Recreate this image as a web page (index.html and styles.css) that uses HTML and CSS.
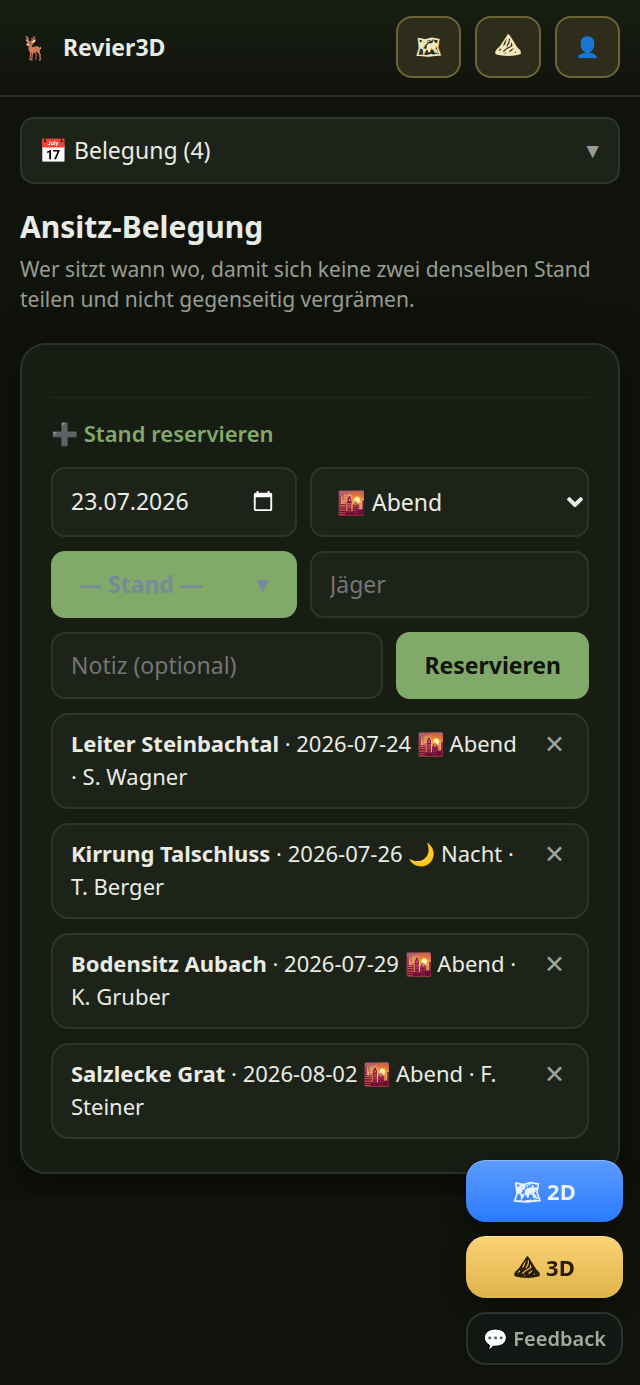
FILE: index.html
```
<!DOCTYPE html>
<html lang="de">
<head>
  <meta charset="UTF-8">
  <meta name="viewport" content="width=device-width, initial-scale=1">
  <title>Revier3D</title>
  <link rel="stylesheet" href="styles.css">
</head>
<body>
<svg class="defs" aria-hidden="true">
  <symbol id="mountain" viewBox="0 0 26 22">
    <path fill="currentColor" fill-rule="evenodd" d="M13 0l1.500 1 4.500 7 3 5 3.500 3.500.5 3-1.500 1-5 1-6 .5-7-.5-5-1L0 19l1-3 4-4 4-6z
      M12 4l-3 5-1 3.500 2-2 1-3z
      M14 4l-.5 4-2 4 .5 1 2.500-4 .5-4z
      M16.500 8l-1 4-4 2-4 3.500 1.500.2 3-2.700 4-2 1.500-1.500z
      M19 14l-3 1.500-2 2 1 .5 2.500-2z
      M5 14.500L3.500 17l1.500-.5 1.500-1.500z
      M21 17.500l-1.500 1 1.500.5z
      M11 18.500l-2 .5 2 .5z"/>
  </symbol>
</svg>

<header class="topbar">
  <span class="logo">🦌</span>
  <span class="brand">Revier3D</span>
  <nav class="top-actions">
    <button class="top-btn" aria-label="Karte 2D">🗺</button>
    <button class="top-btn" aria-label="Karte 3D"><svg class="mountain"><use href="#mountain"/></svg></button>
    <button class="top-btn" aria-label="Profil">👤</button>
  </nav>
</header>

<main>
  <button class="tab-select"><span>📅 Belegung (4)</span><span class="caret">▼</span></button>

  <h1>Ansitz-Belegung</h1>
  <p class="lead">Wer sitzt wann wo, damit sich keine zwei denselben Stand teilen und nicht gegenseitig vergrämen.</p>

  <section class="card">
    <form class="reserve">
      <h2>➕ Stand reservieren</h2>
      <div class="row">
        <div class="field date-field">
          <input type="text" value="23.07.2026" aria-label="Datum">
          <button type="button" class="picker" aria-label="Kalender öffnen">
            <svg viewBox="0 0 24 24" width="22" height="22" fill="currentColor"><path d="M20 3h-1V1h-2v2H7V1H5v2H4c-1.100 0-2 .9-2 2v16c0 1.100.9 2 2 2h16c1.100 0 2-.9 2-2V5c0-1.100-.9-2-2-2zm0 18H4V8h16v13z"/></svg>
          </button>
        </div>
        <div class="field select-field">
          <select aria-label="Tageszeit">
            <option>🌇 Abend</option>
            <option>🌙 Nacht</option>
          </select>
          <svg class="chevron" viewBox="0 0 16 10" width="16" height="10" fill="none" stroke="currentColor" stroke-width="4"><path d="M1 1l7 7 7-7"/></svg>
        </div>
      </div>
      <div class="row">
        <button type="button" class="stand-select"><span>— Stand —</span><span class="caret">▼</span></button>
        <input class="field" type="text" placeholder="Jäger" aria-label="Jäger">
      </div>
      <div class="row row-note">
        <input class="field" type="text" placeholder="Notiz (optional)" aria-label="Notiz">
        <button type="button" class="submit">Reservieren</button>
      </div>
    </form>

    <ul class="bookings">
      <li><span><b>Leiter Steinbachtal</b> · 2026-07-24 🌇 Abend · S. Wagner</span><button aria-label="Löschen">✕</button></li>
      <li><span><b>Kirrung Talschluss</b> · 2026-07-26 🌙 Nacht · T. Berger</span><button aria-label="Löschen">✕</button></li>
      <li><span><b>Bodensitz Aubach</b> · 2026-07-29 🌇 Abend · K. Gruber</span><button aria-label="Löschen">✕</button></li>
      <li><span><b>Salzlecke Grat</b> · 2026-08-02 🌇 Abend · F. Steiner</span><button aria-label="Löschen">✕</button></li>
    </ul>
  </section>
</main>

<div class="floating">
  <button class="fab fab-2d">🗺 2D</button>
  <button class="fab fab-3d"><svg class="mountain"><use href="#mountain"/></svg> 3D</button>
  <button class="fab fab-feedback">💬 Feedback</button>
</div>
</body>
</html>
```
FILE: styles.css
```
:root {
  --bg: #10130c;
  --card: #181d14;
  --field: #1e2319;
  --line: #30352c;
  --text: #e9ece4;
  --muted: #989d91;
  --green: #81a969;
}
* {
  box-sizing: border-box;
}
body {
  margin: 0;
  background: var(--bg);
  color: var(--text);
  font: 23px/32px "Noto Sans", sans-serif;
}
button, input, select {
  font: inherit;
  color: inherit;
  margin: 0;
}
button {
  cursor: pointer;
}
.defs {
  display: none;
}
.mountain {
  width: 26px;
  height: 22px;
  vertical-align: -2px;
}

/* header */
.topbar {
  display: flex;
  align-items: center;
  padding: 16px 20px 17px;
  border-bottom: 2px solid #292c26;
  background: linear-gradient(#181e14, #10130c);
}
.logo {
  width: 43px;
}
.brand {
  font-weight: 700;
}
.top-actions {
  display: flex;
  gap: 14px;
  margin-left: auto;
}
.top-btn {
  height: 62px;
  padding: 0 18px;
  border: 2px solid #6c6537;
  border-radius: 16px;
  background: #2e2d1b;
  color: #f4e6b8;
  font-size: 20px;
  font-weight: 600;
}

main {
  padding: 20px;
}
.tab-select {
  display: flex;
  align-items: center;
  justify-content: space-between;
  width: 100%;
  height: 67px;
  padding: 0 15px 2px 17px;
  border: 2px solid var(--line);
  border-radius: 14px;
  background: var(--field);
}
.caret {
  color: #979b94;
  font-size: 21px;
}
h1 {
  margin: 22px 0 6px;
  font-size: 30px;
  line-height: 42px;
}
.lead {
  margin: 0 0 29px;
  color: var(--muted);
  font-size: 21px;
  line-height: 30px;
}

/* reservation form */
.card {
  padding: 52px 29px 33px;
  border: 2px solid #2c3129;
  border-radius: 26px;
  background: var(--card);
  box-shadow: 0 16px 48px rgba(0, 0, 0, .5);
}
.reserve {
  display: flex;
  flex-direction: column;
  gap: 14px;
  border-top: 1px solid #23281f;
}
h2 {
  margin: 19px 0 4px;
  color: var(--green);
  font-size: 22px;
  line-height: 32px;
  font-weight: 600;
}
.row {
  display: grid;
  grid-template-columns: 246fr 279fr;
  gap: 13px;
}
.row-note {
  grid-template-columns: 1fr auto;
}
.field {
  width: 100%;
  min-width: 0;
  height: 67px;
  padding: 0 18px 2px;
  border: 2px solid var(--line);
  border-radius: 14px;
  background: var(--field);
}
.field::placeholder {
  color: #757575;
}
.date-field, .select-field {
  display: flex;
  align-items: center;
  height: 70px;
}
.date-field input {
  flex: 1;
  min-width: 0;
  padding: 0;
  border: 0;
  background: none;
}
.picker {
  display: flex;
  padding: 0 3px;
  border: 0;
  background: none;
  color: #fff;
}
.select-field {
  padding: 0 4px 0 25px;
}
.select-field select {
  flex: 1;
  padding: 0;
  border: 0;
  background: none;
  appearance: none;
}
.stand-select, .submit {
  height: 67px;
  padding: 0 28px 2px;
  border: 0;
  border-radius: 14px;
  background: var(--green);
  color: #10150c;
  font-weight: 700;
}
.stand-select {
  display: flex;
  align-items: center;
  justify-content: space-between;
  padding-right: 24px;
}
.stand-select, .stand-select .caret {
  color: #758b9b;
}

/* bookings */
.bookings {
  display: flex;
  flex-direction: column;
  gap: 14px;
  margin: 14px 0 0;
  padding: 0;
  font-size: 22px;
  line-height: 33px;
  list-style: none;
}
.bookings li {
  display: flex;
  align-items: flex-start;
  justify-content: space-between;
  gap: 14px;
  padding: 12px 18px 14px;
  border: 2px solid var(--line);
  border-radius: 18px;
  background: var(--field);
}
.bookings button {
  padding: 0 4px;
  border: 0;
  background: none;
  color: #a1a69a;
  font-size: 25px;
}

/* floating buttons */
.floating {
  position: fixed;
  right: 17px;
  bottom: 20px;
  display: flex;
  flex-direction: column;
  gap: 14px;
}
.fab {
  height: 62px;
  padding: 0 15px;
  border: 0;
  border-radius: 20px;
  font-size: 22px;
  font-weight: 700;
  box-shadow: 0 6px 20px rgba(0, 0, 0, .45), inset 0 1px 0 rgba(255, 255, 255, .3);
}
.fab-2d {
  background: linear-gradient(#5c9bff, #2b7bff);
  color: #eaf2ff;
}
.fab-3d {
  background: linear-gradient(#fbd375, #dfb44b);
  color: #2a1d05;
}
.fab-feedback {
  height: 53px;
  border: 2px solid #2c332c;
  background: #111813;
  color: #a4aba0;
  font-size: 20px;
  font-weight: 600;
  box-shadow: none;
}
```
